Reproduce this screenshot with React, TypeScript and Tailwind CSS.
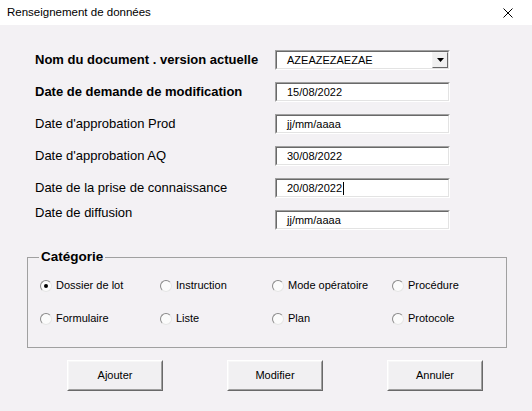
import React from 'react';

type Row = { label: string; value: string; bold?: boolean; combo?: boolean; caret?: boolean; lift?: boolean };

const rows: Row[] = [
  { label: 'Nom du document . version actuelle', value: 'AZEAZEZAEZAE', bold: true, combo: true },
  { label: 'Date de demande de modification', value: '15/08/2022', bold: true },
  { label: "Date d'approbation Prod", value: 'jj/mm/aaaa' },
  { label: "Date d'approbation AQ", value: '30/08/2022' },
  { label: 'Date de la prise de connaissance', value: '20/08/2022', caret: true },
  { label: 'Date de diffusion', value: 'jj/mm/aaaa', lift: true },
];

const categories = [
  ['Dossier de lot', 'Instruction', 'Mode opératoire', 'Procédure'],
  ['Formulaire', 'Liste', 'Plan', 'Protocole'],
];
const colWidths = ['w-[120px]', 'w-[112px]', 'w-[120px]', 'w-[110px]'];

const Sunken: React.FC<{ children: React.ReactNode }> = ({ children }) => (
  <div className="w-[175px] h-[20px] border border-t-[#a0a0a0] border-l-[#a0a0a0] border-r-white border-b-white">
    <div className="h-full border border-t-[#696969] border-l-[#696969] border-r-[#e3e3e3] border-b-[#e3e3e3] bg-white flex items-center">
      {children}
    </div>
  </div>
);

const Radio: React.FC<{ checked?: boolean }> = ({ checked }) => (
  <span className="w-[12px] h-[12px] rounded-full border border-t-[#8a8a8a] border-l-[#8a8a8a] border-r-[#e6e6e6] border-b-[#e6e6e6] bg-[#fbfbfb] flex items-center justify-center shrink-0">
    {checked && <span className="w-[4px] h-[4px] rounded-full bg-black" />}
  </span>
);

const Button: React.FC<{ label: string }> = ({ label }) => (
  <div className="w-[96px] h-[31px] border border-t-white border-l-white border-r-[#696969] border-b-[#696969]">
    <div className="h-full border border-t-[#f7f7f7] border-l-[#f7f7f7] border-r-[#a0a0a0] border-b-[#a0a0a0] bg-[#f1f0f2] flex items-center justify-center text-[11px] text-black">
      {label}
    </div>
  </div>
);

export default function App() {
  return (
    <div className="w-[532px] h-[411px] bg-[#f3f1f4] overflow-hidden flex flex-col font-['Liberation_Sans',Arial,sans-serif] text-black">
      <div className="h-[25px] bg-white flex items-center justify-between pl-[7px] pr-[19px] shrink-0">
        <span className="text-[11.5px]">Renseignement de données</span>
        <svg width="10" height="10" viewBox="0 0 10 10" className="text-black">
          <path d="M0.5 0.5L9.5 9.5M9.5 0.5L0.5 9.5" stroke="currentColor" strokeWidth="1" fill="none" />
        </svg>
      </div>

      <div className="pl-[27px] pt-[19px] flex flex-col">
        <div className="pl-[8px] flex flex-col">
          {rows.map((r) => (
            <div key={r.label} className="h-[32px] flex items-center">
              <div className={`w-[240px] ${r.bold ? 'text-[13px] font-bold' : 'text-[13px]'} ${r.lift ? 'pb-[15px]' : ''}`}>{r.label}</div>
              <Sunken>
                <span className="pl-[10px] text-[11px] leading-none flex items-center">
                  {r.value}
                  {r.caret && <span className="ml-[1px] w-[1px] h-[13px] bg-black" />}
                </span>
                {r.combo && (
                  <div className="ml-auto mr-0 w-[16px] h-[16px] border border-t-[#f4f4f4] border-l-[#f4f4f4] border-r-[#696969] border-b-[#696969] bg-[#f0f0f0] flex items-center justify-center">
                    <svg width="7" height="4" viewBox="0 0 7 4">
                      <path d="M0 0H7L3.5 4Z" fill="black" />
                    </svg>
                  </div>
                )}
              </Sunken>
            </div>
          ))}
        </div>

        <fieldset className="mt-[13px] w-[480px] border border-[#a0a0a0] px-0 pb-[12px]">
          <legend className="ml-[11px] px-[2px] text-[13.5px] font-bold leading-[16px]">Catégorie</legend>
          <div className="pl-[12px] pt-[4px] flex flex-col">
            {categories.map((line, i) => (
              <div key={i} className="h-[33px] flex items-center">
                {line.map((c, j) => (
                  <div key={c} className={`${colWidths[j]} flex items-center gap-[4px] text-[11px]`}>
                    <Radio checked={i === 0 && j === 0} />
                    <span>{c}</span>
                  </div>
                ))}
              </div>
            ))}
          </div>
        </fieldset>

        <div className="mt-[12px] ml-[40px] flex gap-[64px]">
          <Button label="Ajouter" />
          <Button label="Modifier" />
          <Button label="Annuler" />
        </div>
      </div>
    </div>
  );
}
